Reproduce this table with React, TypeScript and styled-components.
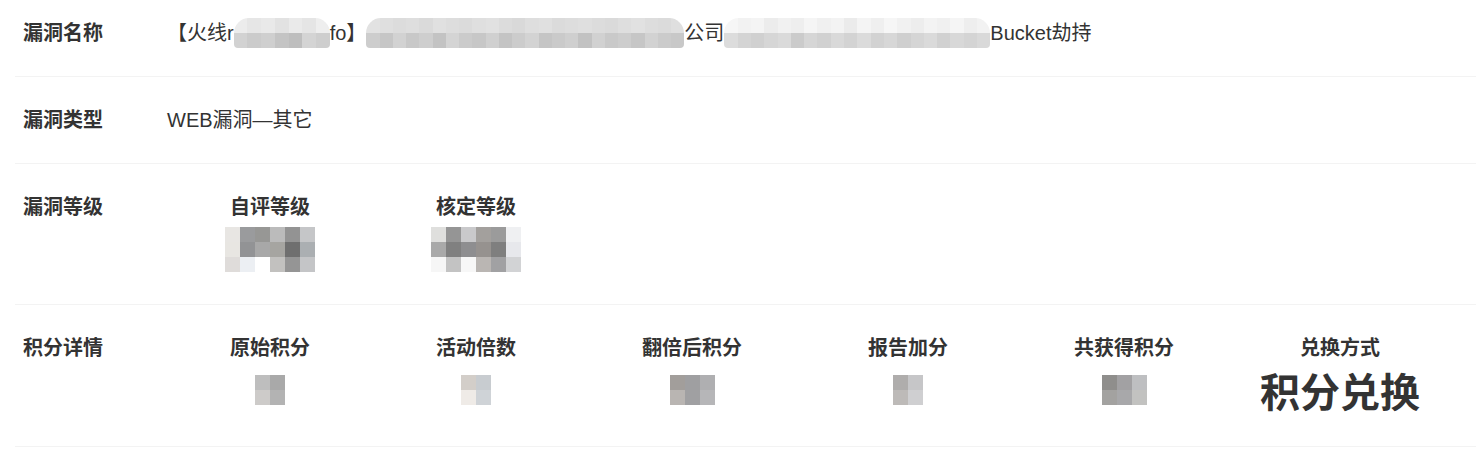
import React from "react";
import styled, { createGlobalStyle } from "styled-components";

const GlobalStyle = createGlobalStyle`
  html, body {
    margin: 0;
    padding: 0;
    background: #ffffff;
  }
  body {
    font-family: "Liberation Sans", "Noto Sans CJK SC", sans-serif;
    color: #333333;
  }
`;

const Panel = styled.div`
  margin-left: 15px;
`;

const Row = styled.div`
  display: flex;
  align-items: flex-start;
  padding: 32px 0 32px 8px;
  border-bottom: 1px solid #f3f3f3;
  &:first-child {
    padding-top: 22px;
  }
`;

const Label = styled.div`
  flex: 0 0 144px;
  font-size: 20px;
  line-height: 22px;
  font-weight: 700;
  color: #333333;
`;

const Value = styled.div`
  display: flex;
  align-items: center;
  font-size: 20px;
  line-height: 22px;
  white-space: nowrap;
  color: #333333;
`;

const Blob = styled.span<{ $w: number; $cols: number }>`
  display: inline-grid;
  grid-template-columns: repeat(${(p) => p.$cols}, 1fr);
  grid-auto-rows: 15px;
  width: ${(p) => p.$w}px;
  margin: -4px 0;
  border-radius: 15px 15px 4px 4px;
  overflow: hidden;
`;

const Mosaic = styled.div<{ $cols: number; $size: number }>`
  display: grid;
  grid-template-columns: repeat(${(p) => p.$cols}, ${(p) => p.$size}px);
  grid-auto-rows: ${(p) => p.$size}px;
  flex: none;
`;

const Pixel = styled.span<{ $c: string }>`
  display: block;
  background: ${(p) => p.$c};
`;

const Items = styled.div`
  display: flex;
  align-items: flex-start;
`;

const Item = styled.div`
  display: flex;
  flex-direction: column;
  align-items: center;
  padding: 0 63px;
`;

const Heading = styled.div`
  font-size: 20px;
  line-height: 22px;
  font-weight: 700;
  white-space: nowrap;
  color: #333333;
`;

const Slot = styled.div<{ $mt: number; $h: number }>`
  width: 0;
  height: ${(p) => p.$h}px;
  margin-top: ${(p) => p.$mt}px;
  display: flex;
  justify-content: center;
  align-items: center;
  white-space: nowrap;
`;

const BigText = styled.div`
  font-size: 40px;
  line-height: 48px;
  font-weight: 700;
  color: #333333;
  font-family: "Noto Sans CJK SC", sans-serif;
`;

const grey = (v: number) => `rgb(${v},${v},${v})`;

const MosaicBlock: React.FC<{ rows: string[][]; size?: number }> = ({ rows, size = 15 }) => (
  <Mosaic $cols={rows[0].length} $size={size}>
    {rows.flat().map((c, i) => (
      <Pixel key={i} $c={c} />
    ))}
  </Mosaic>
);

const BlobBlock: React.FC<{ top: number[]; bottom: number[]; width: number }> = ({ top, bottom, width }) => (
  <Blob $w={width} $cols={top.length}>
    {[...top, ...bottom].map((v, i) => (
      <Pixel key={i} $c={grey(v)} />
    ))}
  </Blob>
);

const blob1Top = [236, 230, 233, 226, 234, 229, 238];
const blob1Bottom = [210, 203, 207, 196, 190, 212, 206];
const blob2Top = [226, 223, 220, 222, 218, 224, 221, 219, 223, 225, 220, 217, 222, 224, 219, 221, 223, 220, 218, 222, 225, 221, 219, 223];
const blob2Bottom = [205, 198, 210, 200, 206, 195, 212, 203, 199, 208, 196, 204, 211, 197, 202, 207, 194, 209, 201, 205, 198, 210, 203, 200];
const blob3Top = [246, 242, 244, 236, 241, 238, 245, 240, 243, 235, 244, 239, 246, 241, 237, 243, 240, 245, 238, 242];
const blob3Bottom = [220, 212, 208, 214, 218, 203, 214, 209, 217, 211, 219, 210, 215, 207, 213, 218, 209, 216, 212, 217];

const selfLevel = [
  ["#e8e6e3", "#9a9b9d", "#979795", "#bbbbbb", "#939393", "#c5c6c8"],
  ["#e8e6e2", "#929395", "#a8a8a8", "#a6a5a1", "#6f6f6f", "#abafb2"],
  ["#dfdcda", "#eceff3", "#ffffff", "#c2c1bf", "#959595", "#c4c5c7"],
];
const finalLevel = [
  ["#dfdfdd", "#959595", "#c9c9cb", "#a3a09d", "#9b9b9b", "#eff0f2"],
  ["#a9a9a9", "#808080", "#8e8e90", "#96928f", "#7f7f7f", "#e7e8ec"],
  ["#f6f6f6", "#c3c3c3", "#f7f7f7", "#bab6b3", "#a1a1a3", "#d2d3d5"],
];

type ScoreItem = { title: string; pixels?: string[][]; text?: string };

const scores: ScoreItem[] = [
  { title: "原始积分", pixels: [["#bebebe", "#a9a9a9"], ["#cdcbc9", "#b3b3b3"]] },
  { title: "活动倍数", pixels: [["#d3cec9", "#c8ccd0"], ["#efebe7", "#cfd3d7"]] },
  { title: "翻倍后积分", pixels: [["#a29e9b", "#9f9fa1", "#afafb1"], ["#b9b5b2", "#a0a0a2", "#b6b6b8"]] },
  { title: "报告加分", pixels: [["#afadac", "#c6c6c8"], ["#bdbab8", "#cfcfd1"]] },
  { title: "共获得积分", pixels: [["#8f8e8c", "#a2a1a3", "#bebfc1"], ["#a3a2a0", "#a8a8aa", "#c2c2c0"]] },
  { title: "兑换方式", text: "积分兑换" },
];

export default function App() {
  return (
    <>
      <GlobalStyle />
      <Panel>
        <Row>
          <Label>漏洞名称</Label>
          <Value>
            【火线r
            <BlobBlock top={blob1Top} bottom={blob1Bottom} width={96} />
            fo】
            <BlobBlock top={blob2Top} bottom={blob2Bottom} width={318} />
            公司
            <BlobBlock top={blob3Top} bottom={blob3Bottom} width={266} />
            Bucket劫持
          </Value>
        </Row>
        <Row>
          <Label>漏洞类型</Label>
          <Value>WEB漏洞—其它</Value>
        </Row>
        <Row>
          <Label>漏洞等级</Label>
          <Items>
            <Item>
              <Heading>自评等级</Heading>
              <Slot $mt={9} $h={45}>
                <MosaicBlock rows={selfLevel} />
              </Slot>
            </Item>
            <Item>
              <Heading>核定等级</Heading>
              <Slot $mt={9} $h={45}>
                <MosaicBlock rows={finalLevel} />
              </Slot>
            </Item>
          </Items>
        </Row>
        <Row>
          <Label>积分详情</Label>
          <Items>
            {scores.map((s) => (
              <Item key={s.title}>
                <Heading>{s.title}</Heading>
                <Slot $mt={7} $h={48}>
                  {s.pixels ? <MosaicBlock rows={s.pixels} /> : <BigText>{s.text}</BigText>}
                </Slot>
              </Item>
            ))}
          </Items>
        </Row>
      </Panel>
    </>
  );
}
